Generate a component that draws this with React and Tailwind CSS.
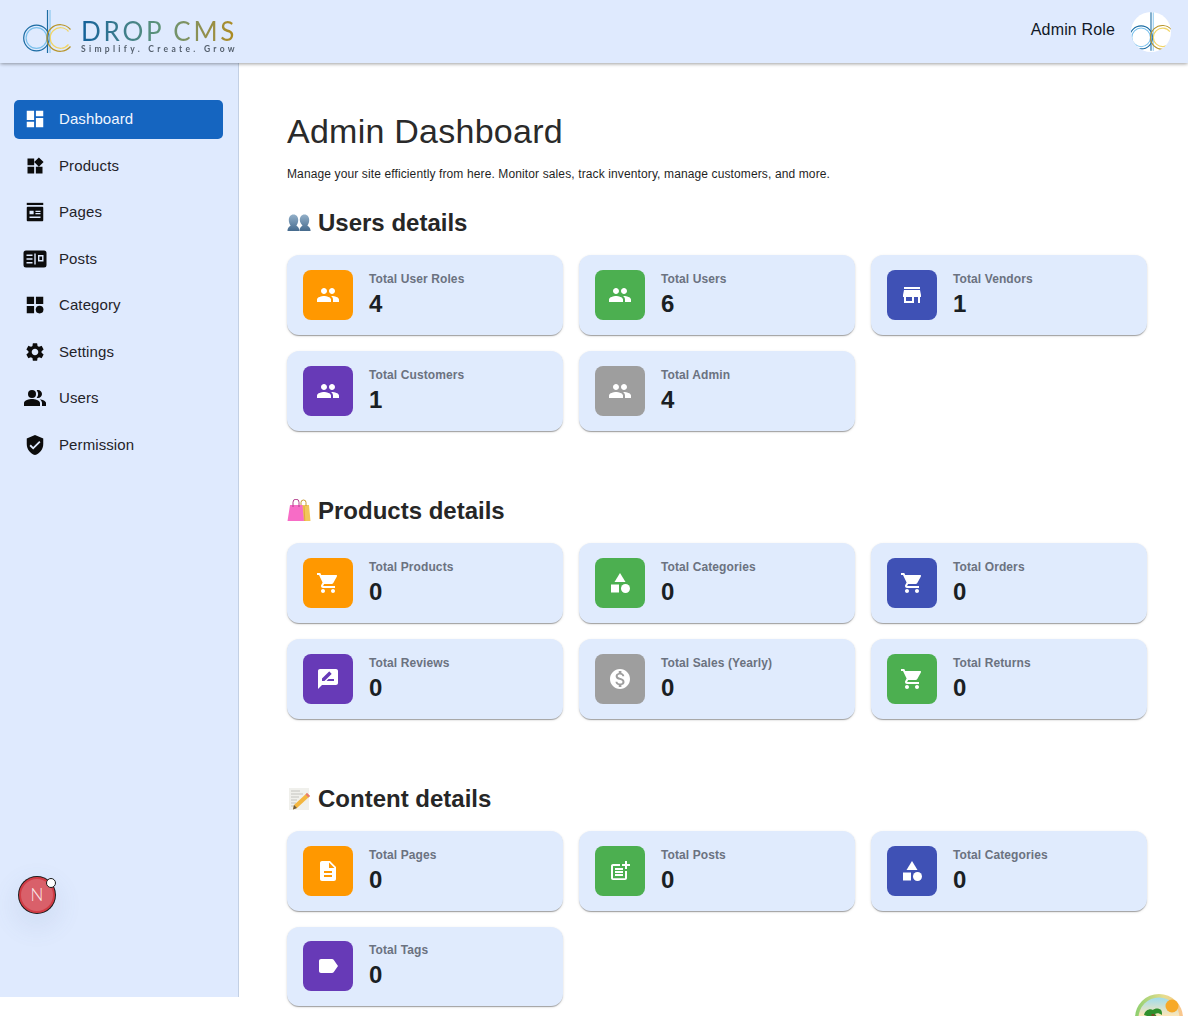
import React from 'react';
import {
  MdDashboard, MdWidgets, MdSettings, MdPeople, MdPeopleAlt, MdVerifiedUser, MdStore, MdShoppingCart,
  MdCategory, MdRateReview, MdMonetizationOn, MdDescription, MdPostAdd, MdLabel,
} from 'react-icons/md';

const PagesIcon = ({ size = 22 }) => (
  <svg width={size} height={size} viewBox="0 0 24 24" fill="currentColor">
    <path d="M3 2h18v2.400H3z" />
    <path fillRule="evenodd" d="M4 6.400h16a1 1 0 0 1 1 1V21a1 1 0 0 1-1 1H4a1 1 0 0 1-1-1V7.400a1 1 0 0 1 1-1zM6 10.500v4h4.500v-4zM12.500 10.500v1.500H18v-1.500zM12.500 13v1.500H18V13zM6 17v1.500h12V17z" />
  </svg>
);

const PostsIcon = () => (
  <svg width="24" height="24" viewBox="0 0 24 24" fill="currentColor">
    <path fillRule="evenodd" d="M3 3.500h18a2.500 2.500 0 0 1 2.500 2.500v12a2.500 2.500 0 0 1-2.500 2.500H3A2.500 2.500 0 0 1 .5 18V6A2.500 2.500 0 0 1 3 3.500zM3.500 7.500v1.400h6V7.500zM3.500 11.300v1.400h6v-1.400zM3.500 15.100v1.400h6v-1.400zM11.300 6.500v11h1.400v-11zM15 8v6.500h5.500V8zM16.400 9.400h2.700v3.700h-2.700z" />
  </svg>
);

const CategoryIcon = () => (
  <svg width="22" height="22" viewBox="0 0 24 24" fill="currentColor">
    <path d="M3 3h8v8H3zM13 3h8v8h-8zM3 13h8v8H3z" />
    <circle cx="17" cy="17" r="4.200" />
  </svg>
);

// the dc mark from the logo, also used for the avatar
const LogoMark = ({ className }) => (
  <svg className={className} viewBox="0 0 49 44" fill="none">
    <circle cx="13.500" cy="28" r="12.800" stroke="#1b6ca3" strokeWidth="1.200" />
    <circle cx="13.500" cy="28" r="10.400" stroke="#7cc1ec" strokeWidth="1.200" />
    <path d="M24.500 0v43" stroke="#1b6ca3" strokeWidth="1.200" />
    <path d="M27 0v43" stroke="#7cc1ec" strokeWidth="1" />
    <path d="M47.500 19.500a13.300 13.300 0 1 0 0 17" stroke="#b8952b" strokeWidth="1.200" />
    <path d="M45.500 21.500a10.300 10.300 0 1 0 0 13" stroke="#f1d567" strokeWidth="1.200" />
  </svg>
);

const BustsEmoji = () => (
  <svg width="24" height="24" viewBox="0 0 24 24">
    <defs>
      <linearGradient id="busts" x1="0" y1="0" x2="0" y2="1">
        <stop offset="0" stopColor="#93b0c9" />
        <stop offset="1" stopColor="#456a8d" />
      </linearGradient>
    </defs>
    <path fill="url(#busts)" d="M6.500 3.500c3 0 4.700 2.400 4.700 5.500 0 2.400-.9 4.200-1.800 5.400 .9 1.300 3 1.600 3 5.600H.5c0-4 2.200-4.300 3.100-5.600C2.700 13.200 1.800 11.400 1.800 9c0-3.100 1.700-5.500 4.700-5.500z" />
    <path fill="url(#busts)" d="M17.500 3.500c3 0 4.700 2.400 4.700 5.500 0 2.400-.9 4.200-1.800 5.400 .9 1.300 3.200 1.600 3.200 5.600H12.500c0-4 2.100-4.300 3-5.600-.9-1.200-2.700-3-2.700-5.400 0-3.100 1.700-5.500 4.700-5.500z" />
  </svg>
);

const BagsEmoji = () => (
  <svg width="24" height="24" viewBox="0 0 24 24" fill="none">
    <path d="M11 6h11l1.500 16H13z" fill="#f2c65a" />
    <path d="M14 7V3.500a2.500 2.500 0 0 1 5 0V7" stroke="#c79a35" strokeWidth="1" />
    <path d="M3 6h12.500l1.500 16H.5z" fill="#f76cc6" />
    <path d="M6 8V3.200a3 3 0 0 1 6 0V8" stroke="#b23f8c" strokeWidth="1" />
    <path d="M17 7l.8 15" stroke="#e2a93c" strokeWidth="1" />
  </svg>
);

const MemoEmoji = () => (
  <svg width="24" height="24" viewBox="0 0 24 24" fill="none">
    <rect x="2" y="1" width="20" height="22" fill="#f0f0ec" />
    <path d="M4 4h9M4 7h12M4 10h8M4 13h6M4 16h5M4 19h3" stroke="#b9b9b5" strokeWidth="0.800" />
    <path d="M20 6l3 3L10 21l-4 1.500L7 18z" fill="#f3b63f" />
    <path d="M20 6l3 3-1.500 1.500-3-3z" fill="#e57878" />
    <path d="M7 18l3 3-4 1.500z" fill="#6a5a40" />
  </svg>
);

const nav = [
  { label: 'Dashboard', icon: <MdDashboard size={22} />, active: true },
  { label: 'Products', icon: <MdWidgets size={20} /> },
  { label: 'Pages', icon: <PagesIcon /> },
  { label: 'Posts', icon: <PostsIcon /> },
  { label: 'Category', icon: <CategoryIcon /> },
  { label: 'Settings', icon: <MdSettings size={22} /> },
  { label: 'Users', icon: <MdPeopleAlt size={24} /> },
  { label: 'Permission', icon: <MdVerifiedUser size={22} /> },
];

const sections = [
  {
    title: 'Users details',
    emoji: <BustsEmoji />,
    grid: 'auto-rows-[80px] gap-y-4',
    cards: [
      { label: 'Total User Roles', value: 4, icon: MdPeople, color: 'bg-[#ff9800]' },
      { label: 'Total Users', value: 6, icon: MdPeople, color: 'bg-[#4caf50]' },
      { label: 'Total Vendors', value: 1, icon: MdStore, color: 'bg-[#3f51b5]' },
      { label: 'Total Customers', value: 1, icon: MdPeople, color: 'bg-[#673ab7]' },
      { label: 'Total Admin', value: 4, icon: MdPeople, color: 'bg-[#9e9e9e]' },
    ],
  },
  {
    title: 'Products details',
    emoji: <BagsEmoji />,
    grid: 'auto-rows-[80px] gap-y-4',
    cards: [
      { label: 'Total Products', value: 0, icon: MdShoppingCart, color: 'bg-[#ff9800]' },
      { label: 'Total Categories', value: 0, icon: MdCategory, color: 'bg-[#4caf50]' },
      { label: 'Total Orders', value: 0, icon: MdShoppingCart, color: 'bg-[#3f51b5]' },
      { label: 'Total Reviews', value: 0, icon: MdRateReview, color: 'bg-[#673ab7]' },
      { label: 'Total Sales (Yearly)', value: 0, icon: MdMonetizationOn, color: 'bg-[#9e9e9e]' },
      { label: 'Total Returns', value: 0, icon: MdShoppingCart, color: 'bg-[#4caf50]' },
    ],
  },
  {
    title: 'Content details',
    emoji: <MemoEmoji />,
    grid: 'grid-rows-[80px_79px] gap-y-[15.5px]',
    cards: [
      { label: 'Total Pages', value: 0, icon: MdDescription, color: 'bg-[#ff9800]' },
      { label: 'Total Posts', value: 0, icon: MdPostAdd, color: 'bg-[#4caf50]' },
      { label: 'Total Categories', value: 0, icon: MdCategory, color: 'bg-[#3f51b5]' },
      { label: 'Total Tags', value: 0, icon: MdLabel, color: 'bg-[#673ab7]' },
    ],
  },
];

const StatCard = ({ label, value, icon: Icon, color }) => (
  <div className="flex h-full items-center gap-4 rounded-xl bg-[#e0ebfd] px-4 shadow-[0_2px_1px_-1px_rgba(0,0,0,0.2),0_1px_1px_0_rgba(0,0,0,0.14),0_1px_3px_0_rgba(0,0,0,0.12)]">
    <div className={`flex h-[50px] w-[50px] items-center justify-center rounded-lg text-white ${color}`}>
      <Icon size={24} />
    </div>
    <div className="-mt-px">
      <p className="text-xs leading-[18px] font-bold tracking-[0.1px] text-[#6b7280]">{label}</p>
      <p className="text-2xl leading-8 font-bold text-[#1a1f24]">{value}</p>
    </div>
  </div>
);

const App = () => {
  return (
    <div className="relative h-[1016px] overflow-hidden bg-white [font-family:'Liberation_Sans',Arial,sans-serif] text-[#1f1f1f]">
      {/* Top bar */}
      <header className="relative z-10 flex h-[63px] items-center justify-between bg-[#dfeafe] pr-[17px] pl-[23px] shadow-[0_2px_4px_-1px_rgba(0,0,0,0.2),0_1px_3px_0_rgba(0,0,0,0.2)]">
        <div className="flex items-center gap-[9px]">
          <LogoMark className="h-11 w-[49px] blur-[0.3px]" />
          <div className="pt-[11px] blur-[0.2px]">
            <div className="bg-gradient-to-r from-[#11609a] via-[#5f9478] to-[#b08a10] bg-clip-text text-[26px] leading-[25px] tracking-[2.8px] text-transparent [font-family:Lato,sans-serif] whitespace-nowrap">
              DROP&nbsp;CMS
            </div>
            <div className="text-[8.5px] leading-[11px] font-bold tracking-[3.3px] text-[#55606e] [font-family:Lato,sans-serif] whitespace-nowrap">
              Simplify. Create. Grow
            </div>
          </div>
        </div>
        <div className="flex items-center gap-4">
          <span className="-mt-[3px] text-base tracking-[0.15px] text-[#111827]">Admin Role</span>
          <div className="flex h-10 w-10 items-center justify-center overflow-hidden rounded-full bg-white">
            <LogoMark className="h-10 w-[44px] shrink-0" />
          </div>
        </div>
      </header>

      <div className="flex items-start">
        {/* Sidebar */}
        <aside className="h-[934px] w-[239px] shrink-0 border-r border-[#c3d0e4] bg-[#dfeafe] pt-[37px] pr-[15px] pl-[14px]">
          <nav className="flex flex-col gap-2">
            {nav.map((item) => (
              <a
                key={item.label}
                className={`flex h-[38.5px] items-center rounded-[5px] text-[15px] tracking-[0.1px] ${
                  item.active ? 'bg-[#1565c0] text-[#f0f6ff]' : 'text-[#1f2329]'
                }`}
              >
                <span className={`flex w-[45px] justify-center pr-[3px] ${item.active ? 'text-white' : 'text-[#0c0c0c]'}`}>{item.icon}</span>
                {item.label}
              </a>
            ))}
          </nav>
        </aside>

        {/* Main content */}
        <main className="min-w-0 flex-1 pt-[47px] pr-[41px] pl-12">
          <h1 className="text-[34px] leading-[42px] tracking-[0.25px] text-[#2a2a2a]">Admin Dashboard</h1>
          <p className="mt-3 text-xs leading-5 tracking-[0.12px] text-[#1f1f1f]">
            Manage your site efficiently from here. Monitor sales, track inventory, manage customers, and more.
          </p>
          <div className="mt-[23px] flex flex-col gap-16">
            {sections.map((section) => (
              <section key={section.title}>
                <h2 className="mb-4 flex h-8 items-center gap-[7px] text-2xl font-bold text-[#262626]">
                  {section.emoji}
                  {section.title}
                </h2>
                <div className={`grid grid-cols-3 gap-x-4 ${section.grid}`}>
                  {section.cards.map((card) => (
                    <StatCard key={card.label} {...card} />
                  ))}
                </div>
              </section>
            ))}
          </div>
        </main>
      </div>

      {/* Dev indicator */}
      <div className="absolute top-[877px] left-[19px] flex h-9 w-9 items-center justify-center rounded-full border-2 border-[#d13c45] bg-[#d9606a] text-[17px] font-light text-[#fbeaea] [font-family:Lato,sans-serif] shadow-[0_0_0_1px_#1a1a1a,0_10px_24px_6px_rgba(90,110,150,0.09)]">
        N
        <span className="absolute -top-px left-[25px] h-[10px] w-[10px] rounded-full border border-[#1a1a1a] bg-white"></span>
      </div>

      {/* Floating badge, cut off by the window */}
      <div className="absolute top-[994px] left-[1135px] h-[48px] w-[48px]">
        <svg width="48" height="48" viewBox="0 0 48 48">
          <defs>
            <linearGradient id="ring" x1="0" y1="0" x2="1" y2="0">
              <stop offset="0" stopColor="#8ccf6e" />
              <stop offset="0.6" stopColor="#e6dd8e" />
              <stop offset="1" stopColor="#fbc48c" />
            </linearGradient>
            <linearGradient id="sky" x1="0" y1="0" x2="0" y2="1">
              <stop offset="0" stopColor="#9fdcec" />
              <stop offset="0.45" stopColor="#fde6b8" />
              <stop offset="1" stopColor="#fdb98a" />
            </linearGradient>
          </defs>
          <circle cx="24" cy="24" r="24" fill="url(#ring)" />
          <circle cx="24" cy="24" r="20.500" fill="url(#sky)" />
          <circle cx="37" cy="12" r="6.500" fill="#f7a928" />
          <path d="M9 21c1-5 6-7 9-5 2-2 6-2 8 0 1 1 1 3 1 5-3-2-5-2-7-1 2 2 3 5 2 7-2-3-4-5-6-5-3 0-5 0-7-1z" fill="#2f8f2c" />
          <path d="M16.500 20h3v16h-3z" fill="#7a4a22" />
        </svg>
      </div>
    </div>
  );
};

export default App;
